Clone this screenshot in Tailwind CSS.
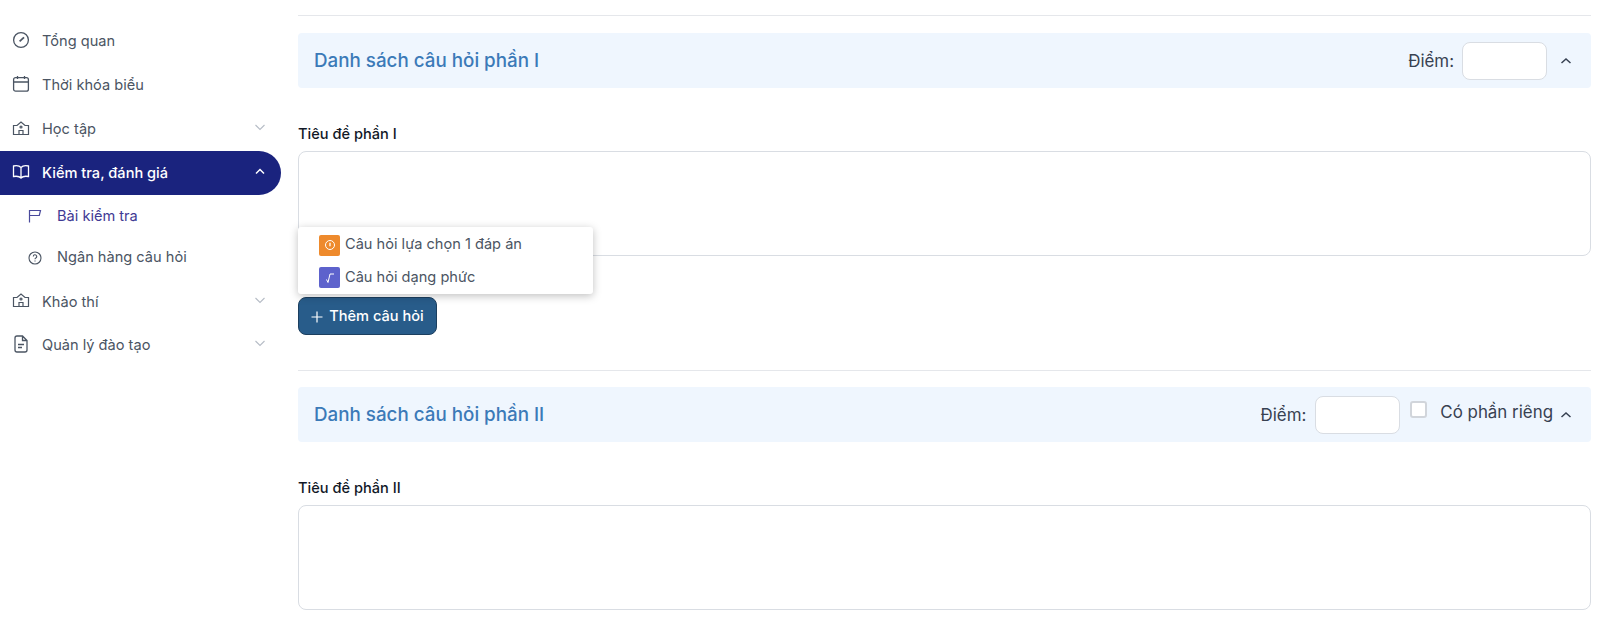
<!DOCTYPE html>
<html lang="vi">
<head>
    <meta charset="UTF-8" />
    <title>Danh sách câu hỏi</title>
    <script src="https://cdn.jsdelivr.net/npm/@tailwindcss/browser@4"></script>
</head>
<body class="bg-white h-[630px] overflow-hidden font-['Inter',sans-serif] text-[14.6px] text-[#4b5563]">
<div class="flex h-full">
    <!-- sidebar -->
    <aside class="w-[298px] shrink-0 pt-[19px] pr-[17px]">
        <nav class="flex flex-col">
            <a class="h-[44px] pt-[2px] flex items-center pl-3 gap-3">
                <svg class="w-[18px] h-[18px] mb-[5px]" viewBox="0 0 18 18" fill="none" stroke="#4b5563" stroke-width="1.3"><circle cx="9" cy="9" r="7.4"/><path d="M7.600 10.400 12 6.400" stroke-width="1.800"/></svg>
                <span>Tổng quan</span>
            </a>
            <a class="h-[44px] pt-[2px] flex items-center pl-3 gap-3">
                <svg class="w-[18px] h-[18px] mb-[5px]" viewBox="0 0 18 18" fill="none" stroke="#4b5563" stroke-width="1.3"><rect x="1.600" y="2.600" width="14.800" height="13.600" rx="2"/><path d="M1.600 7h14.800M5.500 1v3M12.500 1v3"/></svg>
                <span>Thời khóa biểu</span>
            </a>
            <a class="h-[44px] pt-[2px] flex items-center pl-3 gap-3">
                <svg class="w-[18px] h-[18px] mb-[5px]" viewBox="0 0 18 18" fill="none" stroke="#4b5563" stroke-width="1.2"><path d="M1.500 6.500h3.500L9 3l4 3.500h3.500v9h-15zM7 15.500v-4h4v4"/><circle cx="9" cy="8" r="1"/></svg>
                <span>Học tập</span>
                <svg class="w-3 h-3 ml-auto mr-[15px] mb-[6px]" viewBox="0 0 12 12" fill="none" stroke="#b6bcc6" stroke-width="1.100"><path d="M1.500 4l4.500 4.500L10.500 4"/></svg>
            </a>
            <a class="h-[44px] pt-[2px] flex items-center pl-3 gap-3 bg-[#1a237e] text-white font-medium rounded-r-[22px]">
                <svg class="w-[18px] h-[18px] mb-[5px]" viewBox="0 0 18 18" fill="none" stroke="#fff" stroke-width="1.300"><path d="M9 4.500C7.500 2.800 4 2.500 1.500 3v10.500c2.500-.4 6-.2 7.500 1.500 1.500-1.700 5-1.900 7.500-1.500V3C14 2.500 10.500 2.800 9 4.500zM9 4.500V15"/></svg>
                <span>Kiểm tra, đánh giá</span>
                <svg class="w-3 h-3 ml-auto mr-[15px] mb-[5px]" viewBox="0 0 12 12" fill="none" stroke="#fff" stroke-width="1.500"><path d="M2 7.500l4-4 4 4"/></svg>
            </a>
            <a class="h-[42px] pt-[2px] flex items-center pl-[28px] gap-[15px] text-[#3f3a94]">
                <svg class="w-[14px] h-[14px] mb-[2px]" viewBox="0 0 14 14" fill="none" stroke="#4a4a9c" stroke-width="1.200"><path d="M1.500 13.500V1.500h11l-1.200 5H1.500"/></svg>
                <span>Bài kiểm tra</span>
            </a>
            <a class="h-[42px] pb-px flex items-center pl-[28px] gap-[15px]">
                <svg class="w-[14px] h-[14px]" viewBox="0 0 14 14" fill="none" stroke="#4b5563" stroke-width="1.100"><circle cx="7" cy="7" r="6"/><path d="M5.300 5.500a1.700 1.700 0 1 1 2.500 1.500c-.6.300-.8.600-.8 1.200M7 9.500v.9"/></svg>
                <span>Ngân hàng câu hỏi</span>
            </a>
            <a class="h-[44px] pt-[3px] flex items-center pl-3 gap-3">
                <svg class="w-[18px] h-[18px] mb-[5px]" viewBox="0 0 18 18" fill="none" stroke="#4b5563" stroke-width="1.200"><path d="M1.500 6.500h3.500L9 3l4 3.500h3.500v9h-15zM7 15.500v-4h4v4"/><circle cx="9" cy="8" r="1"/></svg>
                <span>Khảo thí</span>
                <svg class="w-3 h-3 ml-auto mr-[15px] mb-[6px]" viewBox="0 0 12 12" fill="none" stroke="#b6bcc6" stroke-width="1.100"><path d="M1.500 4l4.500 4.500L10.500 4"/></svg>
            </a>
            <a class="h-[44px] pt-[2px] flex items-center pl-3 gap-3">
                <svg class="w-[18px] h-[18px] mb-[5px]" viewBox="0 0 18 18" fill="none" stroke="#4b5563" stroke-width="1.300"><path d="M3 3a2 2 0 0 1 2-2h5.500L15 5.500V15a2 2 0 0 1-2 2H5a2 2 0 0 1-2-2zM10.500 1v4.500H15M6 9.500h6M6 12.500h4"/></svg>
                <span>Quản lý đào tạo</span>
                <svg class="w-3 h-3 ml-auto mr-[15px] mb-[6px]" viewBox="0 0 12 12" fill="none" stroke="#b6bcc6" stroke-width="1.100"><path d="M1.500 4l4.500 4.500L10.500 4"/></svg>
            </a>
        </nav>
    </aside>

    <!-- main -->
    <main class="flex-1 mr-[9px] pt-[15px]">
        <hr class="border-[#e5e7eb]" />
        <section class="mt-[17px]">
            <div class="h-[55px] bg-[#eff6fe] rounded-[4px] flex items-center pl-4 pr-[19px]">
                <h2 class="pt-[2px] text-[18.800px] font-medium text-[#3b7ab8]">Danh sách câu hỏi phần I</h2>
                <span class="ml-auto pt-[2px] text-[#374151] text-[16.900px]">Điểm:</span>
                <input class="ml-2 w-[85px] h-[38px] bg-white border border-[#d9dde3] rounded-[8px]" />
                <svg class="w-3 h-3 ml-[13px]" viewBox="0 0 12 12" fill="none" stroke="#374151" stroke-width="1.500"><path d="M1.500 8l4.500-4 4.500 4"/></svg>
            </div>
            <label class="block mt-[37px] mb-2 text-[14.600px] leading-[18px] font-medium text-[#111827]">Tiêu đề phần I</label>
            <textarea class="block w-full h-[105px] border border-[#d9dde3] rounded-[8px] resize-none"></textarea>
            <div class="relative mt-[41px]">
                <!-- dropdown over the textarea -->
                <div class="absolute left-0 bottom-[41px] w-[295px] h-[67px] bg-white rounded-[3px] shadow-[0_2px_8px_rgba(0,0,0,0.25)] pl-[21px] pt-[2px] flex flex-col">
                    <div class="h-[32px] flex items-center gap-[5px]">
                        <span class="w-[21px] h-[21px] rounded-[2px] bg-[#ee8a2c] flex items-center justify-center">
                            <svg class="w-3 h-3" viewBox="0 0 12 12" fill="none" stroke="#fff" stroke-width="1"><circle cx="6" cy="6" r="4.500"/><path d="M6 3.800v3.400" stroke-width="1.300"/></svg>
                        </span>
                        <span>Câu hỏi lựa chọn 1 đáp án</span>
                    </div>
                    <div class="h-[33px] flex items-center gap-[5px]">
                        <span class="w-[21px] h-[21px] rounded-[2px] bg-[#5d62cc] flex items-center justify-center">
                            <svg class="w-3 h-3" viewBox="0 0 12 12" fill="none" stroke="#fff" stroke-width="1"><path d="M2.500 7.500l1.500 3L6 2h4"/></svg>
                        </span>
                        <span>Câu hỏi dạng phức</span>
                    </div>
                </div>
                <button class="w-[139px] h-[38px] pt-px flex items-center justify-center gap-[6px] bg-[#285c8a] border border-[#1c3f5f] rounded-[8px] text-white font-medium">
                    <svg class="w-3 h-3" viewBox="0 0 12 12" fill="none" stroke="#fff" stroke-width="1.200"><path d="M6 .5v11M.5 6h11"/></svg>
                    Thêm câu hỏi
                </button>
            </div>
        </section>
        <hr class="border-[#e5e7eb] mt-[35px]" />
        <section class="mt-4">
            <div class="h-[55px] bg-[#eff6fe] rounded-[4px] flex items-center pl-4 pr-[19px]">
                <h2 class="pt-[2px] text-[18.800px] font-medium text-[#3b7ab8]">Danh sách câu hỏi phần II</h2>
                <span class="ml-auto pt-[2px] text-[#374151] text-[16.900px]">Điểm:</span>
                <input class="ml-[9px] w-[85px] h-[38px] bg-white border border-[#d9dde3] rounded-[8px]" />
                <input type="checkbox" class="ml-[10px] mb-[10px] appearance-none w-[17px] h-[17px] bg-white border-2 border-[#d1d5db] rounded-[3px]" />
                <span class="ml-[13px] mb-[4px] text-[16.900px] text-[#374151]">Có phần riêng</span>
                <svg class="w-3 h-3 ml-[7px]" viewBox="0 0 12 12" fill="none" stroke="#374151" stroke-width="1.500"><path d="M1.500 8l4.500-4 4.500 4"/></svg>
            </div>
            <label class="block mt-[37px] mb-2 text-[14.600px] leading-[18px] font-medium text-[#111827]">Tiêu đề phần II</label>
            <textarea class="block w-full h-[105px] border border-[#d9dde3] rounded-[8px] resize-none"></textarea>
        </section>
    </main>
</div>
</body>
</html>
